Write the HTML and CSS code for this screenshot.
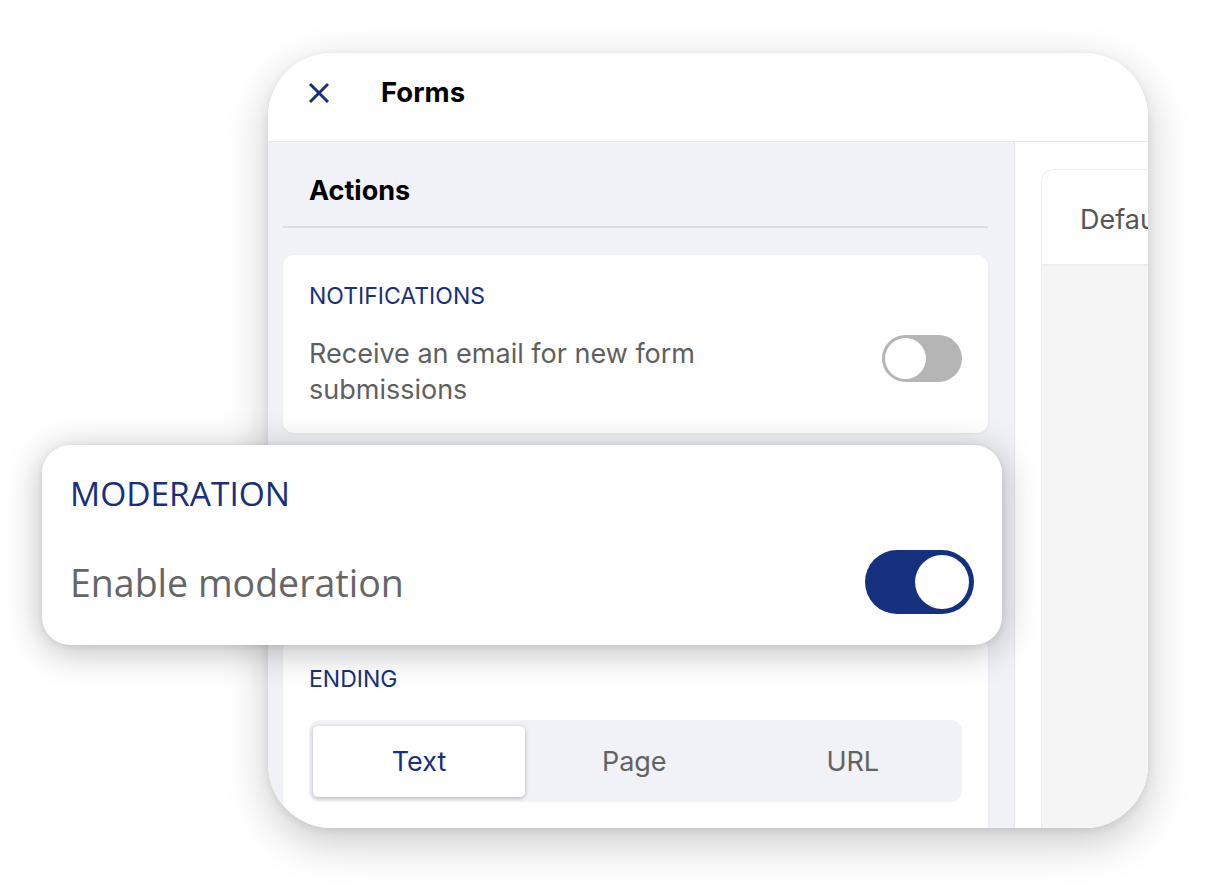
FILE: index.html
```html
<!DOCTYPE html>
<html lang="en">
<head>
<meta charset="utf-8">
<title>Forms</title>
<link rel="stylesheet" href="styles.css">
</head>
<body>
<div class="stage">
  <div class="window">
    <header class="header">
      <svg class="close" width="22" height="22" viewBox="0 0 22 22" aria-hidden="true">
        <path d="M2 2 L20 20 M20 2 L2 20" stroke="#172f7c" stroke-width="3" stroke-linecap="butt" fill="none"/>
      </svg>
      <h1 class="title">Forms</h1>
    </header>
    <div class="main">
      <aside class="sidebar">
        <h2 class="section-title">Actions</h2>
        <div class="card notif">
          <div class="label">NOTIFICATIONS</div>
          <div class="row">
            <p class="row-text">Receive an email for new form submissions</p>
            <span class="toggle off"><span class="knob"></span></span>
          </div>
        </div>
        <div class="card placeholder"></div>
        <div class="card ending">
          <div class="label">ENDING</div>
          <div class="segmented">
            <div class="seg active">Text</div>
            <div class="seg">Page</div>
            <div class="seg">URL</div>
          </div>
        </div>
      </aside>
      <section class="panel">
        <div class="pcard">
          <div class="pcard-head">Default</div>
          <div class="pcard-body"></div>
        </div>
      </section>
    </div>
  </div>

  <div class="float-card">
    <div class="float-label">MODERATION</div>
    <div class="float-row">
      <span class="float-text">Enable moderation</span>
      <span class="toggle on"><span class="knob"></span></span>
    </div>
  </div>
</div>
</body>
</html>
```

FILE: styles.css
```css
* { box-sizing: border-box; }
html, body {
  margin: 0;
  padding: 0;
  background: #ffffff;
  font-family: "Inter", "Liberation Sans", sans-serif;
}
.stage {
  position: relative;
  width: 1208px;
  height: 894px;
  overflow: hidden;
  padding: 53px 0 0 268px;
}
.window {
  width: 880px;
  height: 775px;
  border-radius: 64px;
  overflow: hidden;
  background: #ffffff;
  box-shadow: 0 14px 44px rgba(0, 0, 0, 0.22), 0 2px 8px rgba(0, 0, 0, 0.08);
  display: flex;
  flex-direction: column;
}
.header {
  height: 89px;
  flex: none;
  display: flex;
  align-items: center;
  padding: 0 0 10px 40px;
  border-bottom: 1px solid #e8e9ef;
  background: #fff;
}
.close { display: block; margin-top: 1px; }
.title {
  margin: 0 0 0 51px;
  font-size: 27.5px;
  font-weight: 700;
  color: #000;
}
.main {
  flex: 1;
  display: flex;
  min-height: 0;
}
.sidebar {
  width: 747px;
  flex: none;
  background: #f1f2f7;
  border-right: 1px solid #e3e4ea;
  padding: 0 26px 0 15px;
  display: flex;
  flex-direction: column;
}
.section-title {
  margin: 0;
  height: 86px;
  padding: 32px 0 0 26px;
  font-size: 27px;
  font-weight: 700;
  color: #000;
  border-bottom: 2px solid #dcdde2;
}
.card {
  background: #fff;
  border-radius: 11px;
  box-shadow: 0 1px 3px rgba(0,0,0,0.06);
  padding: 0 26px;
}
.notif {
  margin-top: 27px;
  height: 178px;
  padding-top: 28px;
}
.label {
  font-size: 23px;
  color: #172f7c;
  line-height: 26px;
}
.row {
  display: flex;
  align-items: flex-start;
  justify-content: space-between;
  margin-top: 27px;
}
.row-text {
  margin: 0;
  width: 440px;
  font-size: 27px;
  line-height: 36px;
  color: #5f5f5f;
}
.toggle {
  display: inline-flex;
  align-items: center;
  border-radius: 999px;
  flex: none;
}
.toggle.off {
  width: 80px;
  height: 47px;
  background: #b5b5b5;
  padding: 3px;
  justify-content: flex-start;
  margin-top: -1px;
}
.toggle.off .knob {
  width: 41px;
  height: 41px;
  border-radius: 50%;
  background: #fff;
}
.placeholder {
  margin-top: 12px;
  height: 181px;
}
.ending {
  margin-top: 12px;
  flex: 1;
  padding-top: 28px;
  border-radius: 11px 11px 0 0;
}
.segmented {
  margin-top: 28px;
  height: 82px;
  background: #f1f2f7;
  border-radius: 11px;
  padding: 6px 0 5px 4px;
  display: flex;
}
.seg {
  flex: 1;
  display: flex;
  align-items: center;
  justify-content: center;
  font-size: 27px;
  color: #626262;
}
.seg.active {
  flex: none;
  width: 212px;
  background: #fff;
  border-radius: 5px;
  color: #172f7c;
  box-shadow: 0 1px 4px rgba(0,0,0,0.28);
}
.panel {
  flex: 1;
  background: #fff;
  padding: 27px 0 0 26px;
  display: flex;
}
.pcard {
  flex: 1;
  width: 200px;
  border: 1px solid #ebecf1;
  border-right: none;
  border-bottom: none;
  border-radius: 13px 0 0 0;
  display: flex;
  flex-direction: column;
  overflow: hidden;
}
.pcard-head {
  height: 96px;
  flex: none;
  padding: 33px 0 0 38px;
  font-size: 27px;
  color: #555;
  white-space: nowrap;
  border-bottom: 2px solid #ececf1;
  background: #fff;
}
.pcard-body {
  flex: 1;
  background: #f5f5f5;
}

/* floating highlighted card */
.float-card {
  position: absolute;
  left: 42px;
  top: 445px;
  width: 960px;
  height: 200px;
  background: #fff;
  border-radius: 28px;
  box-shadow: 0 6px 36px rgba(0,0,0,0.28), 0 1px 6px rgba(0,0,0,0.08);
  padding: 27px 28px 0 28px;
}
.float-label {
  font-family: "Open Sans", "Noto Sans", sans-serif;
  font-size: 33.5px;
  line-height: 42px;
  color: #172f7c;
}
.float-row {
  display: flex;
  align-items: center;
  justify-content: space-between;
  margin-top: 36px;
}
.float-text {
  font-family: "Open Sans", "Noto Sans", sans-serif;
  font-size: 37.5px;
  color: #666;
}
.toggle.on {
  width: 109px;
  height: 64px;
  background: #15307f;
  padding: 5px;
  justify-content: flex-end;
}
.toggle.on .knob {
  width: 54px;
  height: 54px;
  border-radius: 50%;
  background: #fff;
}
```
